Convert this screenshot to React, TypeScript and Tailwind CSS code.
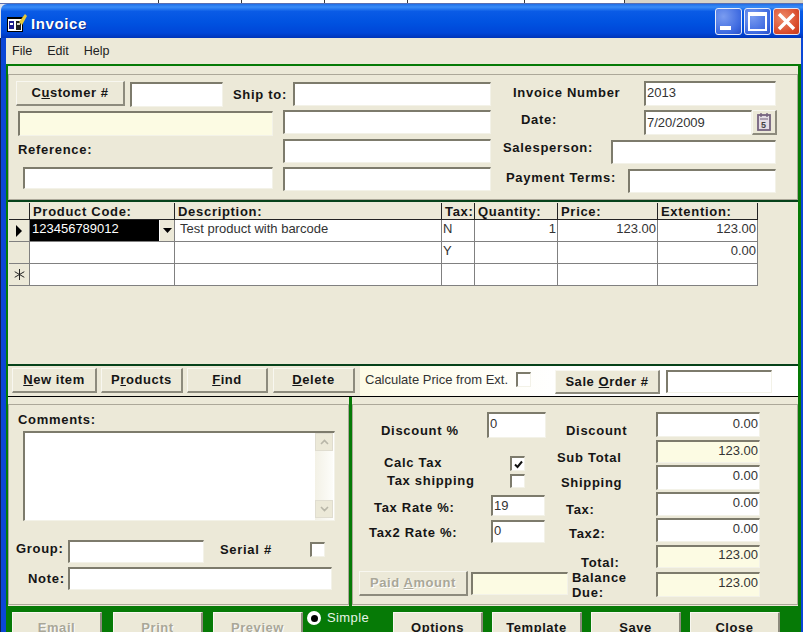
import React from 'react';

const colWidths = 'grid-cols-[21px_145px_267px_33px_83px_100px_100px]';

function Label({ className = '', children }: { className?: string; children: React.ReactNode }) {
  return (
    <div className={`shrink-0 whitespace-nowrap text-[13px] leading-[15px] font-bold tracking-[0.7px] text-[#151515] ${className}`}>
      {children}
    </div>
  );
}

// sunken win32 text box
function Field({
  className = '',
  cream = false,
  right = false,
  children,
}: {
  className?: string;
  cream?: boolean;
  right?: boolean;
  children?: React.ReactNode;
}) {
  return (
    <div
      className={`shrink-0 overflow-hidden border-t-2 border-l-2 border-r border-b border-t-[#7d7b6c] border-l-[#7d7b6c] border-r-[#f3f2e8] border-b-[#f3f2e8] px-px pt-px text-[13px] leading-[15px] text-[#333] ${cream ? 'bg-[#fcfbe3]' : 'bg-white'} ${right ? 'text-right' : ''} ${className}`}
    >
      {children}
    </div>
  );
}

function Btn({
  className = '',
  disabled = false,
  children,
}: {
  className?: string;
  disabled?: boolean;
  children: React.ReactNode;
}) {
  return (
    <div
      className={`flex shrink-0 items-center justify-center border-t border-l border-r-2 border-b-2 border-t-[#f8f7f0] border-l-[#f8f7f0] border-r-[#8d8b7d] border-b-[#8d8b7d] bg-[#ece9d8] text-[13px] font-bold tracking-[0.55px] ${disabled ? 'text-[#a9a798] [text-shadow:1px_1px_#ffffff]' : 'text-[#151515]'} ${className}`}
    >
      {children}
    </div>
  );
}

function Check({ className = '', checked = false }: { className?: string; checked?: boolean }) {
  return (
    <div className={`flex h-[15px] w-[15px] shrink-0 items-center justify-center border-t-2 border-l-2 border-r border-b border-t-[#7d7b6c] border-l-[#7d7b6c] border-r-[#f3f2e8] border-b-[#f3f2e8] bg-white ${className}`}>
      {checked && (
        <svg width="9" height="9" viewBox="0 0 9 9">
          <path d="M1 4.5 L3.5 7 L8 1.5" fill="none" stroke="#111" strokeWidth="2" />
        </svg>
      )}
    </div>
  );
}

function AppIcon() {
  return (
    <svg width="20" height="18" viewBox="0 0 20 18" className="mt-[3px] shrink-0">
      <rect x="0" y="3" width="16" height="15" fill="#000" />
      <rect x="1" y="5" width="14" height="12" fill="#fff" />
      <rect x="2" y="7" width="5" height="8" fill="#1c1c8c" />
      <rect x="3" y="9" width="3" height="2" fill="#fff" />
      <rect x="9" y="7" width="5" height="9" fill="#222" />
      <rect x="10" y="9" width="3" height="2" fill="#d8d8c8" />
      <path d="M12 8 L18 0 L20 2 L15 11 Z" fill="#e6c93a" />
    </svg>
  );
}

function CaptionBtn({ kind }: { kind: 'min' | 'max' | 'close' }) {
  if (kind === 'close') {
    return (
      <div className="flex h-[27px] w-[27px] items-center justify-center rounded-[3px] border border-[#e8e4f0] bg-[radial-gradient(circle_at_35%_35%,#ee8a68,#d8492a_70%,#c23a1c)]">
        <svg width="19" height="19" viewBox="0 0 19 19">
          <path d="M2 2 L17 17 M17 2 L2 17" stroke="#fff" strokeWidth="3.4" />
        </svg>
      </div>
    );
  }
  return (
    <div className="flex h-[27px] w-[27px] items-center justify-center rounded-[3px] border border-[#e8ecf8] bg-[radial-gradient(circle_at_30%_30%,#7a9cf0,#3d69e0_70%,#2a50c8)]">
      {kind === 'min' ? (
        <div className="mt-[13px] mr-[7px] h-[4px] w-[11px] bg-white" />
      ) : (
        <div className="h-[19px] w-[19px] border-2 border-t-[4px] border-white" />
      )}
    </div>
  );
}

function TopStrip() {
  const cell = 'h-full shrink-0 overflow-hidden border-r border-[#3a3a3a] bg-white';
  const txt = '-mt-[11px] text-[13px] leading-[13px] text-[#444] text-right pr-[2px]';
  return (
    <div className="flex h-[4px] shrink-0 overflow-hidden border-b border-[#5b6fb0] bg-[#d8d5c8]">
      <div className={`${cell} flex w-[159px] items-start text-[13px] leading-[13px] text-[#444]`}>
        <span className="-mt-[11px] ml-[18px]">V</span>
        <span className="-mt-[11px] ml-[18px]">I</span>
        <span className="-mt-[11px] ml-[12px]">O</span>
        <span className="-mt-[11px] ml-[1px]">D</span>
        <span className="-mt-[11px] ml-[1px]">I</span>
      </div>
      <div className={`${cell} w-[83px]`}><div className={txt}>600.SE</div></div>
      <div className={`${cell} w-[83px]`}><div className={txt}>600.SE</div></div>
      <div className={`${cell} w-[83px]`} />
      <div className={`${cell} w-[117px]`} />
      <div className={`${cell} w-[100px]`} />
    </div>
  );
}

function TopPanel() {
  return (
    <div className="h-[134px] shrink-0 bg-[#ece9d8] pt-[8px]">
      <div className="flex h-[126px] border-t border-l border-r border-b border-[#aca899] pt-[6px]">
        <div className="w-[482px] shrink-0">
          <div className="flex h-[29px] items-start">
            <Btn className="ml-[7px] h-[25px] w-[109px]">C<u>u</u>stomer #</Btn>
            <Field className="mt-px ml-[5px] h-[25px] w-[93px]" />
            <Label className="mt-[6px] ml-[10px] w-[60px]">Ship to:</Label>
            <Field className="mt-px h-[24px] w-[198px]" />
          </div>
          <div className="flex h-[29px] items-start">
            <Field cream className="mt-px ml-[9px] h-[25px] w-[255px]" />
            <Field className="ml-[10px] h-[24px] w-[208px]" />
          </div>
          <div className="flex h-[28px] items-start">
            <Label className="mt-[3px] ml-[9px] w-[265px]">Reference:</Label>
            <Field className="h-[24px] w-[208px]" />
          </div>
          <div className="flex items-start">
            <Field className="ml-[14px] h-[22px] w-[250px]" />
            <Field className="ml-[10px] h-[24px] w-[208px]" />
          </div>
        </div>
        <div className="flex-1">
          <div className="flex h-[29px] items-start">
            <Label className="mt-[4px] ml-[22px] w-[131px]">Invoice Number</Label>
            <Field className="h-[25px] w-[132px] !pt-[2px]">2013</Field>
          </div>
          <div className="flex h-[30px] items-start">
            <Label className="mt-[2px] ml-[30px] w-[123px]">Date:</Label>
            <Field className="h-[25px] w-[108px] !pt-[3px]">7/20/2009</Field>
            <Btn className="h-[25px] w-[25px]">
              <svg width="14" height="18" viewBox="0 0 14 18">
                <rect x="1" y="2" width="12" height="15" fill="#e4dde4" stroke="#75637f" strokeWidth="1.8" />
                <path d="M4 0 V4 M10 0 V4" stroke="#75637f" strokeWidth="1.4" />
                <path d="M3 6 H11" stroke="#75637f" />
                <text x="4" y="15" fontSize="9" fill="#444" fontFamily="Liberation Sans">5</text>
              </svg>
            </Btn>
          </div>
          <div className="flex h-[29px] items-start">
            <Label className="ml-[12px] w-[108px]">Salesperson:</Label>
            <Field className="h-[24px] w-[165px]" />
          </div>
          <div className="flex items-start">
            <Label className="mt-px ml-[15px] w-[122px]">Payment Terms:</Label>
            <Field className="h-[24px] w-[148px]" />
          </div>
        </div>
      </div>
    </div>
  );
}

function GridRow({ mark, cells }: { mark?: React.ReactNode; cells: React.ReactNode[] }) {
  const c = 'h-[22px] overflow-hidden border-r border-b border-[#808080] bg-white px-px text-[13px] leading-[18px] text-[#333]';
  return (
    <div className={`grid ${colWidths}`}>
      <div className="flex h-[22px] items-center justify-center border-r border-b border-[#808080] bg-[#ece9d8]">{mark}</div>
      {cells.map((v, i) => (
        <div key={i} className={`${c} ${i >= 3 ? 'text-right' : ''} ${i === 1 ? 'pl-[5px]' : ''}`}>{v}</div>
      ))}
    </div>
  );
}

function ItemGrid() {
  const h = 'h-[17px] overflow-hidden border-r border-b border-[#222] pl-[3px] text-[13px] leading-[17px] font-bold tracking-[0.7px] whitespace-nowrap text-[#151515]';
  return (
    <div className="h-[162px] shrink-0 bg-[#ece9d8] pl-px">
      <div className={`grid ${colWidths} pt-px`}>
        <div className={h} />
        <div className={h}>Product Code:</div>
        <div className={h}>Description:</div>
        <div className={h}>Tax:</div>
        <div className={h}>Quantity:</div>
        <div className={h}>Price:</div>
        <div className={h}>Extention:</div>
      </div>
      <GridRow
        mark={
          <svg width="8" height="12" viewBox="0 0 8 12">
            <path d="M1 0 L7 6 L1 12 Z" fill="#000" />
          </svg>
        }
        cells={[
          <div className="-mx-px -mt-px flex h-[22px]">
            <div className="flex-1 bg-black pl-[2px] leading-[19px] text-white">123456789012</div>
            <div className="flex w-[15px] items-center justify-center border-t border-l border-t-white border-l-white bg-[#ece9d8]">
              <svg width="9" height="5" viewBox="0 0 9 5">
                <path d="M0 0 H9 L4.5 5 Z" fill="#000" />
              </svg>
            </div>
          </div>,
          'Test product  with barcode',
          <div className="text-left">N</div>,
          '1',
          '123.00',
          '123.00',
        ]}
      />
      <GridRow cells={['', '', <div className="text-left">Y</div>, '', '', '0.00']} />
      <GridRow
        mark={
          <svg width="11" height="11" viewBox="0 0 11 11">
            <path d="M5.5 0 V11 M0.7 2.7 L10.3 8.3 M0.7 8.3 L10.3 2.7" stroke="#222" strokeWidth="1" />
          </svg>
        }
        cells={['', '', '', '', '', '']}
      />
    </div>
  );
}

function Toolbar() {
  return (
    <div className="flex h-[31px] shrink-0 items-start border-b border-black bg-[#ece9d8]">
      <Btn className="mt-[2px] ml-[4px] h-[25px] w-[85px]"><span><u>N</u>ew item</span></Btn>
      <Btn className="mt-[2px] ml-[4px] h-[25px] w-[82px]"><span>P<u>r</u>oducts</span></Btn>
      <Btn className="mt-[2px] ml-[4px] h-[25px] w-[81px]"><span><u>F</u>ind</span></Btn>
      <Btn className="mt-[2px] ml-[5px] h-[25px] w-[82px]"><span><u>D</u>elete</span></Btn>
      <div className="ml-[5px] flex h-full flex-1 items-start bg-[linear-gradient(90deg,#fdfbe6,#ffffff_45%)]">
        <div className="mt-[6px] w-[156px] pl-[5px] text-[13px] leading-[15px] whitespace-nowrap text-[#333]">Calculate Price from Ext.</div>
        <Check className="mt-[6px]" />
        <Btn className="mt-[4px] ml-[24px] h-[24px] w-[105px]"><span>Sale <u>O</u>rder #</span></Btn>
        <Field className="mt-[4px] ml-[6px] h-[23px] w-[106px]" />
      </div>
    </div>
  );
}

function CommentsPanel() {
  return (
    <div className="h-full w-[341px] shrink-0 bg-[#ece9d8] pt-[7px]">
      <div className="h-[201px] border border-[#aca899] pt-[7px]">
        <Label className="ml-[9px]">Comments:</Label>
        <Field className="mt-[4px] ml-[14px] flex h-[90px] w-[312px] justify-end !pt-0">
          <div className="flex h-full w-[18px] flex-col bg-[linear-gradient(90deg,#f3f1e6,#fdfdfa)] pb-[2px]">
            <div className="flex h-[18px] items-center justify-center border border-[#e0ddd0] bg-[#ece9d8]">
              <svg width="9" height="6" viewBox="0 0 9 6"><path d="M1 5 L4.5 1.5 L8 5" fill="none" stroke="#b8b6a8" strokeWidth="1.6" /></svg>
            </div>
            <div className="flex-1" />
            <div className="flex h-[18px] items-center justify-center border border-[#e0ddd0] bg-[#ece9d8]">
              <svg width="9" height="6" viewBox="0 0 9 6"><path d="M1 1 L4.5 4.5 L8 1" fill="none" stroke="#b8b6a8" strokeWidth="1.6" /></svg>
            </div>
          </div>
        </Field>
        <div className="mt-[19px] flex h-[27px] items-start">
          <Label className="mt-[1px] ml-[7px] w-[52px]">Group:</Label>
          <Field className="h-[23px] w-[136px]" />
          <Label className="mt-[2px] ml-[16px] w-[90px]">Serial #</Label>
          <Check className="mt-[2px]" />
        </div>
        <div className="flex items-start">
          <Label className="mt-[4px] ml-[19px] w-[40px]">Note:</Label>
          <Field className="h-[23px] w-[264px]" />
        </div>
      </div>
    </div>
  );
}

function TotalsRow({
  rowClass,
  labelClass,
  fieldClass,
  label,
  value,
  cream = false,
}: {
  rowClass: string;
  labelClass: string;
  fieldClass: string;
  label: React.ReactNode;
  value: string;
  cream?: boolean;
}) {
  return (
    <div className={`flex items-start ${rowClass}`}>
      <div className="w-[99px] shrink-0">
        <Label className={labelClass}>{label}</Label>
      </div>
      <Field right cream={cream} className={`w-[104px] ${fieldClass}`}>{value}</Field>
    </div>
  );
}

function TotalsPanel() {
  return (
    <div className="h-full flex-1 bg-[#ece9d8] pt-[7px]">
      <div className="flex h-[201px] border border-[#aca899] pt-[7px]">
        <div className="w-[204px] shrink-0">
          <div className="flex h-[44px] items-start">
            <Label className="mt-[11px] ml-[28px] w-[106px]">Discount %</Label>
            <Field className="h-[26px] w-[59px] !pt-[2px]">0</Field>
          </div>
          <div className="flex h-[18px] items-start">
            <Label className="-mt-[1px] ml-[31px] w-[126px]">Calc Tax</Label>
            <Check checked />
          </div>
          <div className="flex h-[21px] items-start">
            <Label className="-mt-[1px] ml-[34px] w-[123px]">Tax shipping</Label>
            <Check className="!h-[14px]" />
          </div>
          <div className="flex h-[25px] items-start">
            <Label className="mt-[5px] ml-[21px] w-[117px]">Tax Rate %:</Label>
            <Field className="h-[21px] w-[54px]">19</Field>
          </div>
          <div className="flex h-[51px] items-start">
            <Label className="mt-[5px] ml-[16px] w-[122px]">Tax2 Rate %:</Label>
            <Field className="h-[23px] w-[54px]">0</Field>
          </div>
          <div className="flex items-start">
            <Btn disabled className="ml-[6px] h-[25px] w-[109px]"><span>Paid <u>A</u>mount</span></Btn>
            <Field cream className="mt-px ml-[3px] h-[23px] w-[97px]" />
          </div>
        </div>
        <div className="flex-1">
          <TotalsRow rowClass="h-[28px]" labelClass="mt-[11px] ml-[9px]" fieldClass="h-[25px] !pt-[2px]" label="Discount" value="0.00" />
          <TotalsRow cream rowClass="h-[25px]" labelClass="mt-[10px]" fieldClass="h-[23px]" label="Sub Total" value="123.00" />
          <TotalsRow rowClass="h-[27px]" labelClass="mt-[10px] ml-[4px]" fieldClass="h-[25px]" label="Shipping" value="0.00" />
          <TotalsRow rowClass="h-[26px]" labelClass="mt-[10px] ml-[9px]" fieldClass="h-[24px]" label="Tax:" value="0.00" />
          <TotalsRow rowClass="h-[27px]" labelClass="mt-[8px] ml-[12px]" fieldClass="h-[24px]" label="Tax2:" value="0.00" />
          <TotalsRow cream rowClass="h-[27px]" labelClass="mt-[10px] ml-[24px]" fieldClass="h-[23px] !pt-0" label="Total:" value="123.00" />
          <TotalsRow
            cream
            rowClass=""
            labelClass="-mt-[2px] ml-[15px]"
            fieldClass="h-[25px]"
            label={<>Balance<br />Due:</>}
            value="123.00"
          />
        </div>
      </div>
    </div>
  );
}

function BottomBar() {
  const b = 'h-[32px] w-[90px]';
  return (
    <div className="flex h-[26px] shrink-0 items-start overflow-hidden pt-[6px]">
      <Btn disabled className={`ml-[4px] ${b}`}>Email</Btn>
      <Btn disabled className={`ml-[11px] ${b}`}>Print</Btn>
      <Btn disabled className={`ml-[10px] ${b}`}>Preview</Btn>
      <div className="-mt-[1px] ml-[4px] flex h-[14px] w-[14px] shrink-0 items-center justify-center rounded-full bg-white">
        <div className="h-[7px] w-[7px] rounded-full bg-black" />
      </div>
      <div className="-mt-[2px] ml-[6px] w-[66px] shrink-0 text-[13px] leading-[15px] tracking-[0.4px] text-[#e8f4e8]">Simple</div>
      <Btn className={b}><span className="font-semibold">Options</span></Btn>
      <Btn className={`ml-[9px] ${b}`}>Template</Btn>
      <Btn className={`ml-[9px] ${b}`}>Save</Btn>
      <Btn className={`ml-[9px] ${b}`}>Close</Btn>
    </div>
  );
}

export default function App() {
  return (
    <div className="flex h-[632px] w-[803px] flex-col overflow-hidden bg-[#dfe3ec] [font-family:'Liberation_Sans',Arial,sans-serif]">
      <TopStrip />

      {/* title bar */}
      <div className="ml-px flex h-[34px] shrink-0 items-center rounded-tl-[6px] bg-[linear-gradient(180deg,#1f6fe8_0%,#3a8cf6_9%,#0a5be6_22%,#0052e0_55%,#0046d8_85%,#0034b8_100%)] pr-[3px] pl-[6px]">
        <AppIcon />
        <div className="mt-[6px] ml-[4px] flex-1 text-[15px] font-bold tracking-[0.6px] text-white [text-shadow:1px_1px_#0f2a8c]">Invoice</div>
        <div className="flex gap-[2px]">
          <CaptionBtn kind="min" />
          <CaptionBtn kind="max" />
          <CaptionBtn kind="close" />
        </div>
      </div>

      <div className="flex min-h-0 flex-1">
        <div className="w-[6px] shrink-0 border-l border-[#10204a] bg-[#0b46d6]" />
        <div className="flex min-w-0 flex-1 flex-col">
          <div className="flex h-[26px] shrink-0 items-center gap-[15px] bg-[#ece9d8] pt-[1px] pl-[6px] text-[12.5px] text-[#222]">
            <span>File</span>
            <span>Edit</span>
            <span>Help</span>
          </div>
          <div className="flex min-h-0 flex-1 flex-col bg-[#067a06] pt-[2px] pr-[3px] pl-[2px]">
            <TopPanel />
            <div className="h-[2px] shrink-0 bg-[#06421a]" />
            <ItemGrid />
            <div className="h-[2px] shrink-0 bg-[#06421a]" />
            <Toolbar />
            <div className="flex h-[209px] shrink-0">
              <CommentsPanel />
              <div className="w-[3px] shrink-0" />
              <TotalsPanel />
            </div>
            <BottomBar />
          </div>
        </div>
        <div className="w-[2px] shrink-0 bg-[#0b46d6]" />
      </div>
    </div>
  );
}
